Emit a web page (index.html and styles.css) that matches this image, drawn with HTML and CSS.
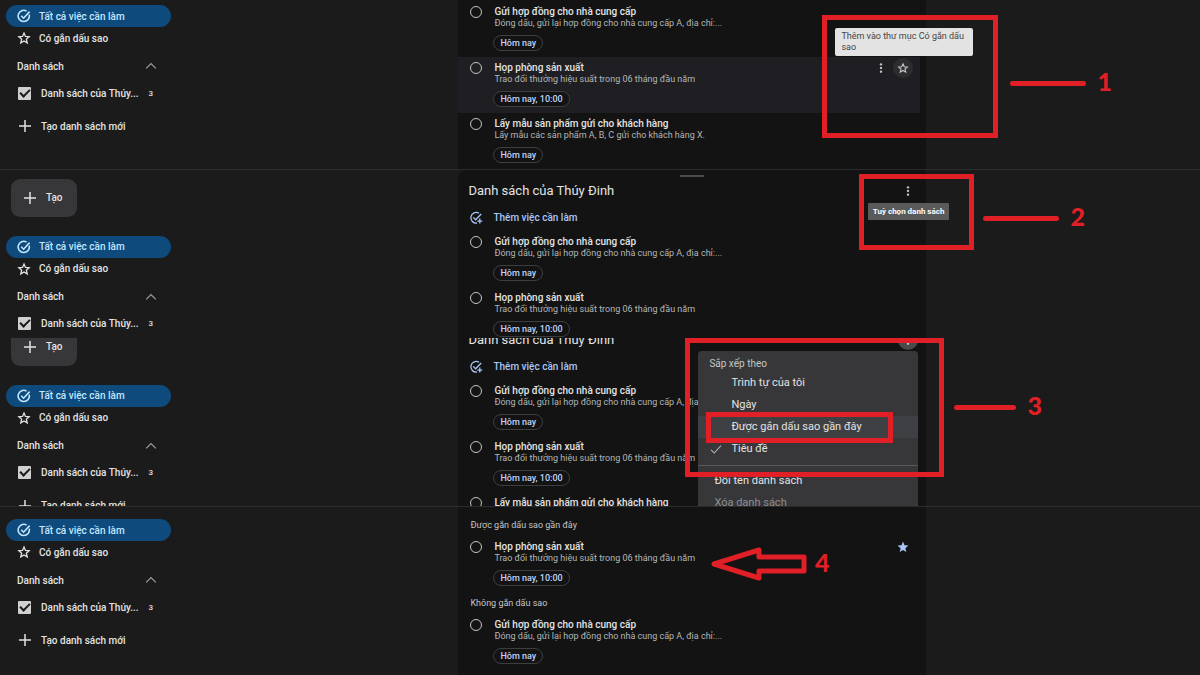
FILE: index.html
```html
<!DOCTYPE html>
<html lang="vi">
<head>
    <meta charset="UTF-8">
    <meta name="viewport" content="width=device-width, initial-scale=1.0">
    <title>Tất cả việc cần làm</title>
    <link rel="stylesheet" href="styles.css">
</head>
<body>

    <!-- shared icons -->
    <svg class="sprite" aria-hidden="true">
        <symbol id="i-done" viewBox="0 0 14 14">
            <path d="M12.2 5.6A5.6 5.6 0 1 1 9.6 2.1M4.2 6.8l2.4 2.4 6-6.6" fill="none" stroke="currentColor" stroke-width="1.6"/>
        </symbol>
        <symbol id="i-add-task" viewBox="0 0 14 14">
            <path d="M10 2.3A5.3 5.3 0 1 0 8 12M4.2 6.4l2.4 2.4 5.6-5.8M10.8 7.6v5M8.3 10.1h5" fill="none" stroke="currentColor" stroke-width="1.3"/>
        </symbol>
        <symbol id="i-star" viewBox="0 0 24 24">
            <path d="M12 3.6l2.5 5.8 6.3.6-4.8 4.1 1.5 6.2L12 17l-5.5 3.3L8 14.1 3.2 10l6.3-.6z" fill="none" stroke="currentColor" stroke-width="2.2"/>
        </symbol>
        <symbol id="i-star-full" viewBox="0 0 24 24">
            <path d="M12 17.8 18.6 22l-1.8-7.6L23 9.2l-8-.6L12 1 9 8.6l-8 .6 6.2 5.2L5.4 22z" fill="currentColor"/>
        </symbol>
        <symbol id="i-up" viewBox="0 0 12 8">
            <path d="M1.2 6.4 6 1.6l4.8 4.8" fill="none" stroke="currentColor" stroke-width="1.3"/>
        </symbol>
        <symbol id="i-plus" viewBox="0 0 12 12">
            <path d="M6 0v12M0 6h12" fill="none" stroke="currentColor" stroke-width="1.5"/>
        </symbol>
        <symbol id="i-dots" viewBox="0 0 12 12">
            <g fill="currentColor"><circle cx="6" cy="1.6" r="1.4"/><circle cx="6" cy="6" r="1.4"/><circle cx="6" cy="10.4" r="1.4"/></g>
        </symbol>
        <symbol id="i-check" viewBox="0 0 12 12">
            <path d="M1 6.8 4.2 10 11 2.6" fill="none" stroke="currentColor" stroke-width="1.1"/>
        </symbol>
    </svg>

    <!-- step 1 -->
    <section class="step">
        <nav class="sidebar">
            <a href="#" class="nav-item active"><svg><use href="#i-done"/></svg>Tất cả việc cần làm</a>
            <a href="#" class="nav-item"><svg><use href="#i-star"/></svg>Có gắn dấu sao</a>
            <button class="nav-heading">Danh sách<svg><use href="#i-up"/></svg></button>
            <div class="list-row">
                <input type="checkbox" id="list1" checked>
                <label for="list1">Danh sách của Thúy...</label>
                <span class="count">3</span>
            </div>
            <button class="new-list"><svg><use href="#i-plus"/></svg>Tạo danh sách mới</button>
        </nav>
        <main class="panel">
            <div class="task">
                <button class="circle" aria-label="Hoàn thành"></button>
                <div class="task-body">
                    <h3>Gửi hợp đồng cho nhà cung cấp</h3>
                    <p>Đóng dấu, gửi lại hợp đồng cho nhà cung cấp A, địa chỉ:...</p>
                    <button class="chip">Hôm nay</button>
                </div>
            </div>
            <div class="task hovered">
                <button class="circle" aria-label="Hoàn thành"></button>
                <div class="task-body">
                    <h3>Họp phòng sản xuất</h3>
                    <p>Trao đổi thưởng hiệu suất trong 06 tháng đầu năm</p>
                    <button class="chip">Hôm nay, 10:00</button>
                </div>
                <div class="actions">
                    <button class="icon-btn" aria-label="Tùy chọn"><svg><use href="#i-dots"/></svg></button>
                    <button class="icon-btn filled" aria-label="Gắn dấu sao"><svg><use href="#i-star"/></svg></button>
                </div>
            </div>
            <div class="task">
                <button class="circle" aria-label="Hoàn thành"></button>
                <div class="task-body">
                    <h3>Lấy mẫu sản phẩm gửi cho khách hàng</h3>
                    <p>Lấy mẫu các sản phẩm A, B, C gửi cho khách hàng X.</p>
                    <button class="chip">Hôm nay</button>
                </div>
            </div>
            <div class="tooltip light">Thêm vào thư mục Có gắn dấu sao</div>
            <div class="mark mark-1"></div>
            <div class="pointer pointer-1"><i></i><b>1</b></div>
        </main>
    </section>

    <!-- step 2 -->
    <section class="step divided">
        <nav class="sidebar with-create">
            <button class="create"><svg><use href="#i-plus"/></svg>Tạo</button>
            <a href="#" class="nav-item active"><svg><use href="#i-done"/></svg>Tất cả việc cần làm</a>
            <a href="#" class="nav-item"><svg><use href="#i-star"/></svg>Có gắn dấu sao</a>
            <button class="nav-heading">Danh sách<svg><use href="#i-up"/></svg></button>
            <div class="list-row">
                <input type="checkbox" id="list2" checked>
                <label for="list2">Danh sách của Thúy...</label>
                <span class="count">3</span>
            </div>
        </nav>
        <main class="panel rounded">
            <div class="handle"></div>
            <header class="panel-head">
                <h2>Danh sách của Thúy Đinh</h2>
                <button class="icon-btn" aria-label="Tuỳ chọn danh sách"><svg><use href="#i-dots"/></svg></button>
            </header>
            <button class="add-task"><svg><use href="#i-add-task"/></svg>Thêm việc cần làm</button>
            <div class="task">
                <button class="circle" aria-label="Hoàn thành"></button>
                <div class="task-body">
                    <h3>Gửi hợp đồng cho nhà cung cấp</h3>
                    <p>Đóng dấu, gửi lại hợp đồng cho nhà cung cấp A, địa chỉ:...</p>
                    <button class="chip">Hôm nay</button>
                </div>
            </div>
            <div class="task">
                <button class="circle" aria-label="Hoàn thành"></button>
                <div class="task-body">
                    <h3>Họp phòng sản xuất</h3>
                    <p>Trao đổi thưởng hiệu suất trong 06 tháng đầu năm</p>
                    <button class="chip">Hôm nay, 10:00</button>
                </div>
            </div>
            <div class="tooltip dark">Tuỳ chọn danh sách</div>
            <div class="mark mark-2"></div>
            <div class="pointer pointer-2"><i></i><b>2</b></div>
        </main>
    </section>

    <!-- step 3 -->
    <section class="step">
        <nav class="sidebar with-create scrolled">
            <button class="create"><svg><use href="#i-plus"/></svg>Tạo</button>
            <a href="#" class="nav-item active"><svg><use href="#i-done"/></svg>Tất cả việc cần làm</a>
            <a href="#" class="nav-item"><svg><use href="#i-star"/></svg>Có gắn dấu sao</a>
            <button class="nav-heading">Danh sách<svg><use href="#i-up"/></svg></button>
            <div class="list-row">
                <input type="checkbox" id="list3" checked>
                <label for="list3">Danh sách của Thúy...</label>
                <span class="count">3</span>
            </div>
            <button class="new-list"><svg><use href="#i-plus"/></svg>Tạo danh sách mới</button>
        </nav>
        <main class="panel">
            <div class="scrolled">
                <div class="handle"></div>
                <header class="panel-head">
                    <h2>Danh sách của Thúy Đinh</h2>
                    <button class="icon-btn pressed" aria-label="Tuỳ chọn danh sách"><svg><use href="#i-dots"/></svg></button>
                </header>
                <button class="add-task"><svg><use href="#i-add-task"/></svg>Thêm việc cần làm</button>
                <div class="task">
                    <button class="circle" aria-label="Hoàn thành"></button>
                    <div class="task-body">
                        <h3>Gửi hợp đồng cho nhà cung cấp</h3>
                        <p>Đóng dấu, gửi lại hợp đồng cho nhà cung cấp A, địa chỉ:...</p>
                        <button class="chip">Hôm nay</button>
                    </div>
                </div>
                <div class="task">
                    <button class="circle" aria-label="Hoàn thành"></button>
                    <div class="task-body">
                        <h3>Họp phòng sản xuất</h3>
                        <p>Trao đổi thưởng hiệu suất trong 06 tháng đầu năm</p>
                        <button class="chip">Hôm nay, 10:00</button>
                    </div>
                </div>
                <div class="task">
                    <button class="circle" aria-label="Hoàn thành"></button>
                    <div class="task-body">
                        <h3>Lấy mẫu sản phẩm gửi cho khách hàng</h3>
                    </div>
                </div>
            </div>
            <div class="menu">
                <div class="menu-title">Sắp xếp theo</div>
                <button class="option">Trình tự của tôi</button>
                <button class="option">Ngày</button>
                <button class="option current">Được gắn dấu sao gần đây</button>
                <button class="option"><svg><use href="#i-check"/></svg>Tiêu đề</button>
                <hr>
                <button>Đổi tên danh sách</button>
                <button disabled>Xóa danh sách</button>
            </div>
            <div class="mark mark-3"></div>
            <div class="mark mark-option"></div>
            <div class="pointer pointer-3"><i></i><b>3</b></div>
        </main>
    </section>

    <!-- step 4 -->
    <section class="step divided">
        <nav class="sidebar lower">
            <a href="#" class="nav-item active"><svg><use href="#i-done"/></svg>Tất cả việc cần làm</a>
            <a href="#" class="nav-item"><svg><use href="#i-star"/></svg>Có gắn dấu sao</a>
            <button class="nav-heading">Danh sách<svg><use href="#i-up"/></svg></button>
            <div class="list-row">
                <input type="checkbox" id="list4" checked>
                <label for="list4">Danh sách của Thúy...</label>
                <span class="count">3</span>
            </div>
            <button class="new-list"><svg><use href="#i-plus"/></svg>Tạo danh sách mới</button>
        </nav>
        <main class="panel grouped">
            <h4>Được gắn dấu sao gần đây</h4>
            <div class="task">
                <button class="circle" aria-label="Hoàn thành"></button>
                <div class="task-body">
                    <h3>Họp phòng sản xuất</h3>
                    <p>Trao đổi thưởng hiệu suất trong 06 tháng đầu năm</p>
                    <button class="chip">Hôm nay, 10:00</button>
                </div>
                <div class="actions">
                    <button class="icon-btn starred" aria-label="Bỏ dấu sao"><svg><use href="#i-star-full"/></svg></button>
                </div>
            </div>
            <h4>Không gắn dấu sao</h4>
            <div class="task">
                <button class="circle" aria-label="Hoàn thành"></button>
                <div class="task-body">
                    <h3>Gửi hợp đồng cho nhà cung cấp</h3>
                    <p>Đóng dấu, gửi lại hợp đồng cho nhà cung cấp A, địa chỉ:...</p>
                    <button class="chip">Hôm nay</button>
                </div>
            </div>
            <div class="pointer pointer-4">
                <svg class="arrow" viewBox="0 0 96 34"><path d="M3 17 48 3v7h45v14H48v7z" fill="none" stroke="currentColor" stroke-width="5" stroke-linejoin="round"/></svg>
                <b>4</b>
            </div>
        </main>
    </section>

</body>
</html>
```
FILE: styles.css
```css
* {
    box-sizing: border-box;
}

body {
    margin: 0;
    height: 100vh;
    display: grid;
    grid-template-rows: repeat(4, minmax(0, 1fr));
    background: #1b1b1b;
    color: #e3e3e3;
    font-family: Roboto, sans-serif;
    font-size: 10px;
}

h2, h3, h4, p {
    margin: 0;
}

button {
    margin: 0;
    padding: 0;
    border: 0;
    background: none;
    color: inherit;
    font: inherit;
    text-align: left;
    cursor: pointer;
}

a {
    color: inherit;
    text-decoration: none;
}

svg {
    flex: none;
    width: 12px;
    height: 12px;
}

.sprite {
    position: absolute;
    width: 0;
    height: 0;
}

.step {
    display: grid;
    grid-template-columns: 38.2% 39% 1fr;
    overflow: hidden;
}

.divided {
    border-top: 1px solid #2c2c2c;
}

/* sidebar */
.sidebar {
    display: flex;
    flex-direction: column;
    align-items: flex-start;
    padding: 5px 0 0 6px;
    font-weight: 500;
}

.sidebar.lower {
    padding-top: 12px;
}

.sidebar.with-create {
    padding-top: 9px;
}

.scrolled {
    margin-top: -19px;
}

.nav-item {
    display: flex;
    flex: none;
    align-items: center;
    gap: 8px;
    width: 165px;
    height: 22px;
    padding-left: 11px;
    border-radius: 11px;
}

.nav-item svg {
    width: 14px;
    height: 14px;
}

.nav-item.active {
    background: #0f4a7c;
    color: #c2e7ff;
}

.nav-heading {
    display: flex;
    flex: none;
    align-items: center;
    justify-content: space-between;
    width: 151px;
    height: 22px;
    margin: 6px 0 5px;
    padding-left: 11px;
}

.nav-heading svg {
    height: 8px;
    color: #9a9a9a;
}

.list-row {
    display: flex;
    flex: none;
    align-items: center;
    height: 22px;
    padding-left: 12px;
}

.list-row input {
    appearance: none;
    width: 13px;
    height: 13px;
    margin: 0 10px 0 0;
    border-radius: 1px;
    background: #d0d0d0;
    display: grid;
    place-items: center;
}

.list-row input:checked::before {
    content: "";
    width: 8px;
    height: 4px;
    margin-bottom: 3px;
    border-left: 2px solid #1b1b1b;
    border-bottom: 2px solid #1b1b1b;
    transform: rotate(-45deg);
}

.count {
    margin-left: 10px;
    font-size: 8px;
}

.new-list {
    display: flex;
    flex: none;
    align-items: center;
    gap: 10px;
    height: 22px;
    margin-top: 11px;
    padding-left: 13px;
}

.create {
    display: flex;
    flex: none;
    align-items: center;
    gap: 10px;
    width: 66px;
    height: 38px;
    margin: 0 0 19px 5px;
    padding-left: 13px;
    border-radius: 9px;
    background: #37373a;
}

/* task panel */
.panel {
    position: relative;
    padding-top: 1px;
    background: #131313;
}

.panel.rounded {
    border-radius: 8px 0 0 0;
}

.panel.grouped {
    padding-top: 7px;
}

.handle {
    width: 24px;
    height: 2px;
    margin: 4px auto 0;
    background: #4a4a4a;
}

.panel-head {
    display: flex;
    align-items: center;
    justify-content: space-between;
    height: 28px;
    padding: 0 8px 0 10px;
}

.panel-head h2 {
    font-size: 13px;
    font-weight: 400;
}

.add-task {
    display: flex;
    align-items: center;
    gap: 10px;
    height: 26px;
    padding-left: 11px;
    color: #a8c7fa;
    font-weight: 500;
}

.add-task svg {
    width: 14px;
    height: 14px;
}

.task {
    display: flex;
    align-items: flex-start;
    height: 56px;
    margin-right: 6px;
    padding: 5px 7px 0 12px;
}

.task.hovered {
    background: #1f1f23;
}

.circle {
    flex: none;
    width: 12px;
    height: 12px;
    margin-right: 12px;
    border: 1px solid #c4c7c5;
    border-radius: 50%;
}

.task-body {
    white-space: nowrap;
}

.task h3 {
    font-size: 10px;
    line-height: 12px;
    font-weight: 500;
}

.task p {
    color: #b4b7b5;
    font-size: 9px;
    line-height: 11px;
}

.chip {
    height: 16px;
    margin: 6px 0 0 -1px;
    padding: 0 6px;
    border: 1px solid #3c3e40;
    border-radius: 8px;
    color: #c0d2f8;
    font-size: 9px;
    line-height: 14px;
    font-weight: 500;
}

.hovered .chip {
    background: #131313;
}

.actions {
    display: flex;
    gap: 2px;
    margin: -4px 0 0 auto;
}

.icon-btn {
    display: grid;
    place-items: center;
    width: 20px;
    height: 20px;
    border-radius: 50%;
    color: #c4c7c5;
}

.icon-btn svg {
    width: 10px;
    height: 10px;
}

.icon-btn.filled {
    background: #2d2d2f;
}

.icon-btn.filled svg,
.icon-btn.starred svg {
    width: 12px;
    height: 12px;
}

.icon-btn.pressed {
    background: #4a4a4c;
}

.icon-btn.starred {
    color: #a8c7fa;
}

.grouped h4 {
    padding-left: 12px;
    color: #c4c7c5;
    font-size: 9px;
    line-height: 22px;
    font-weight: 400;
}

/* tooltips */
.tooltip {
    position: absolute;
}

.tooltip.light {
    top: 28px;
    right: -47px;
    width: 138px;
    padding: 3px 6px;
    border-radius: 2px;
    background: #e3e3e3;
    color: #444;
    font-size: 9px;
    line-height: 11px;
}

.tooltip.dark {
    top: 33px;
    right: -23px;
    padding: 0 5px;
    border-radius: 1px;
    background: #5a5a5a;
    color: #fff;
    font-size: 8px;
    line-height: 17px;
    font-weight: 700;
}

/* sort menu */
.menu {
    position: absolute;
    top: 13px;
    right: 8px;
    width: 220px;
    padding-top: 4px;
    border-radius: 4px 4px 0 0;
    background: #37373a;
    font-size: 11px;
}

.menu-title {
    padding-left: 11px;
    color: #c4c7c5;
    font-size: 10px;
    line-height: 17px;
}

.menu button {
    display: block;
    width: 100%;
    padding-left: 16px;
    line-height: 22px;
}

.menu .option {
    display: flex;
    align-items: center;
    padding-left: 33px;
}

.menu .option svg {
    margin: 0 9px 0 -21px;
    color: #b0b0b0;
}

.menu .current {
    background: #3f4043;
}

.menu button:disabled {
    color: #8e8e90;
}

.menu hr {
    margin: 5px 0 4px;
    border: 0;
    border-top: 1px solid #5a5a5c;
}

/* red marks over the panel */
.mark {
    position: absolute;
    border: 5px solid #e01f26;
}

.mark-1 {
    top: 15px;
    right: -72px;
    width: 176px;
    height: 123px;
}

.mark-2 {
    top: 4px;
    right: -48px;
    width: 115px;
    height: 76px;
}

.mark-3 {
    top: 0;
    right: -18px;
    width: 259px;
    height: 139px;
}

.mark-option {
    top: 74px;
    right: 33px;
    width: 187px;
    height: 31px;
}

.pointer {
    position: absolute;
    left: 100%;
    display: flex;
    align-items: center;
    gap: 11px;
    color: #e01f26;
    font-family: Lato, sans-serif;
    font-size: 25px;
    line-height: 24px;
}

.pointer b {
    padding-bottom: 5px;
    font-weight: 900;
}

.pointer i {
    width: 76px;
    height: 5px;
    border-radius: 3px;
    background: #e01f26;
}

.pointer-1 {
    top: 69px;
    margin-left: 84px;
}

.pointer-2 {
    top: 34px;
    margin-left: 57px;
}

.pointer-3 {
    top: 55px;
    margin-left: 28px;
}

.pointer-3 i {
    width: 62px;
}

.pointer-4 {
    top: 40px;
    right: 97px;
    left: auto;
    gap: 8px;
}

.arrow {
    width: 96px;
    height: 34px;
}
```
